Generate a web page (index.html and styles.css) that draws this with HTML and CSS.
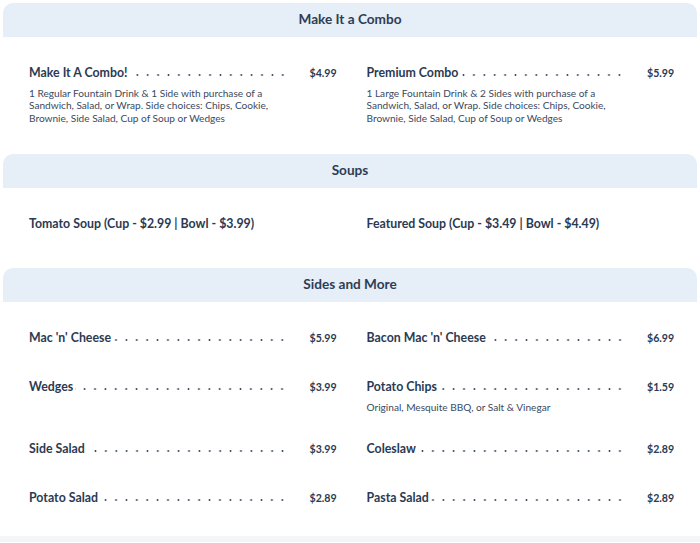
FILE: index.html
```html
<!DOCTYPE html>
<html>
<head>
<meta charset="utf-8">
<link rel="stylesheet" href="styles.css">
</head>
<body>
<div class="page">
  <section class="menu-section">
    <h2 class="section-head">Make It a Combo</h2>
    <div class="section-body body-combo">
      <div class="item">
        <div class="item-line"><span class="item-name">Make It A Combo!</span><span class="leader"></span><span class="price">$4.99</span></div>
        <p class="item-desc">1 Regular Fountain Drink &amp; 1 Side with purchase of a Sandwich, Salad, or Wrap. Side choices: Chips, Cookie, Brownie, Side Salad, Cup of Soup or Wedges</p>
      </div>
      <div class="item">
        <div class="item-line"><span class="item-name">Premium Combo</span><span class="leader"></span><span class="price">$5.99</span></div>
        <p class="item-desc">1 Large Fountain Drink &amp; 2 Sides with purchase of a Sandwich, Salad, or Wrap. Side choices: Chips, Cookie, Brownie, Side Salad, Cup of Soup or Wedges</p>
      </div>
    </div>
  </section>
  <section class="menu-section">
    <h2 class="section-head">Soups</h2>
    <div class="section-body body-soups">
      <div class="item">
        <div class="item-line"><span class="item-name">Tomato Soup (Cup - $2.99 | Bowl - $3.99)</span></div>
      </div>
      <div class="item">
        <div class="item-line"><span class="item-name">Featured Soup (Cup - $3.49 | Bowl - $4.49)</span></div>
      </div>
    </div>
  </section>
  <section class="menu-section">
    <h2 class="section-head">Sides and More</h2>
    <div class="section-body body-sides">
      <div class="item">
        <div class="item-line"><span class="item-name">Mac 'n' Cheese</span><span class="leader"></span><span class="price">$5.99</span></div>
      </div>
      <div class="item">
        <div class="item-line"><span class="item-name">Bacon Mac 'n' Cheese</span><span class="leader"></span><span class="price">$6.99</span></div>
      </div>
      <div class="item">
        <div class="item-line"><span class="item-name">Wedges</span><span class="leader"></span><span class="price">$3.99</span></div>
      </div>
      <div class="item">
        <div class="item-line"><span class="item-name">Potato Chips</span><span class="leader"></span><span class="price">$1.59</span></div>
        <p class="item-desc">Original, Mesquite BBQ, or Salt &amp; Vinegar</p>
      </div>
      <div class="item">
        <div class="item-line"><span class="item-name">Side Salad</span><span class="leader"></span><span class="price">$3.99</span></div>
      </div>
      <div class="item">
        <div class="item-line"><span class="item-name">Coleslaw</span><span class="leader"></span><span class="price">$2.89</span></div>
      </div>
      <div class="item">
        <div class="item-line"><span class="item-name">Potato Salad</span><span class="leader"></span><span class="price">$2.89</span></div>
      </div>
      <div class="item">
        <div class="item-line"><span class="item-name">Pasta Salad</span><span class="leader"></span><span class="price">$2.89</span></div>
      </div>
    </div>
  </section>
  <div class="footer-strip"></div>
</div>
</body>
</html>
```

FILE: styles.css
```css
* { box-sizing: border-box; }
html, body {
  margin: 0;
  padding: 0;
  background: #ffffff;
}
body {
  font-family: Lato, "Noto Sans", sans-serif;
  color: #2b3a52;
}
.page {
  padding-top: 3px;
}
.section-head {
  margin: 0 3px;
  height: 34px;
  padding-bottom: 2px;
  display: flex;
  align-items: center;
  justify-content: center;
  background: #e6eef7;
  border-radius: 10px 10px 0 0;
  font-size: 13.6px;
  font-weight: 700;
  color: #2e3d55;
}
.section-body {
  display: grid;
  grid-template-columns: 1fr 1fr;
  column-gap: 31px;
  row-gap: 27px;
  padding: 26.5px 27px 26px 29px;
}
.body-combo { padding-bottom: 30px; }
.body-soups { padding-bottom: 31.5px; }
.body-sides { padding-bottom: 25px; }
.item {
  min-height: 22px;
}
.item-line {
  display: flex;
  align-items: baseline;
  height: 18px;
  line-height: 18px;
}
.item-name {
  font-size: 12.35px;
  font-weight: 700;
  white-space: nowrap;
  color: #2b3a52;
}
.leader {
  flex: 1;
  height: 4px;
  margin-left: 2px;
  margin-right: 22px;
  background-image: radial-gradient(circle, #3a4a62 0.75px, transparent 1.2px);
  background-size: 10.4px 4px;
  background-position: right bottom;
  background-repeat: repeat-x;
}
.price {
  width: 26px;
  text-align: right;
  font-size: 10.6px;
  font-weight: 700;
  white-space: nowrap;
  color: #2b3a52;
}
.item-desc {
  margin: 5px 0 0;
  font-size: 10.1px;
  line-height: 12.5px;
  color: #3a4960;
  max-width: 250px;
}
.footer-strip {
  height: 6px;
  background: #f4f5f7;
}
```
